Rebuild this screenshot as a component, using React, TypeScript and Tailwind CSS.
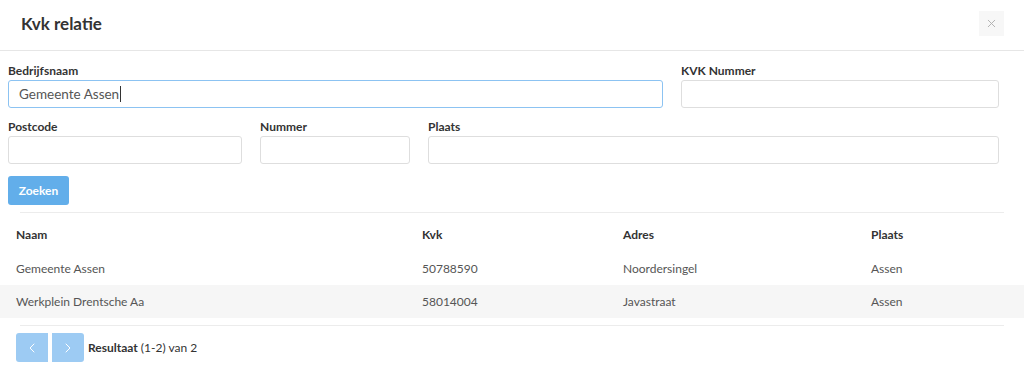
import { ChevronLeft, ChevronRight, X } from "lucide-react";

const rows = [
  { naam: "Gemeente Assen", kvk: "50788590", adres: "Noordersingel", plaats: "Assen" },
  { naam: "Werkplein Drentsche Aa", kvk: "58014004", adres: "Javastraat", plaats: "Assen" },
];

function Field({ label, width, focused, value }: { label: string; width: string; focused?: boolean; value?: string }) {
  return (
    <label className={`flex flex-col ${width}`}>
      <span className="h-[17px] text-[12px] font-bold leading-[16px] text-[#333]">{label}</span>
      <div
        className={`flex h-[28px] items-center rounded-[3px] border bg-white px-[10px] text-[13.5px] text-[#555] ${
          focused ? "border-[#8cc3f2]" : "border-[#dedede]"
        }`}
      >
        {value}
        {focused && <span className="ml-px inline-block h-[16px] w-px bg-[#333]" />}
      </div>
    </label>
  );
}

export default function App() {
  return (
    <div className="h-[374px] w-[1024px] bg-white font-['Lato',sans-serif] text-[#333]">
      <header className="flex h-[51px] items-center justify-between border-b border-[#e6e6e6] pl-[21px] pr-[20px]">
        <h1 className="-mt-[2px] text-[17px] font-bold text-[#333]">Kvk relatie</h1>
        <button className="-mt-[3px] flex h-[25px] w-[25px] items-center justify-center bg-[#f7f7f7] text-[#b0b0b0]">
          <X size={13} strokeWidth={1.75} />
        </button>
      </header>

      <div className="flex flex-col px-[8px] pt-[12px]">
        <div className="flex gap-[18px]">
          <Field label="Bedrijfsnaam" width="w-[655px]" focused value="Gemeente Assen" />
          <Field label="KVK Nummer" width="w-[318px]" />
        </div>
        <div className="mt-[11px] flex gap-[18px]">
          <Field label="Postcode" width="w-[234px]" />
          <Field label="Nummer" width="w-[150px]" />
          <Field label="Plaats" width="w-[571px]" />
        </div>
        <div className="mt-[12px]">
          <button className="h-[29px] w-[61px] rounded-[3px] bg-[#62aeea] text-[12px] font-bold text-white">
            Zoeken
          </button>
        </div>
      </div>

      <div className="mx-[20px] mt-[7px] border-t border-[#ececec]" />

      <table className="mt-[5px] w-[1024px] table-fixed border-collapse text-[12px]">
        <colgroup>
          <col className="w-[406px]" />
          <col className="w-[201px]" />
          <col className="w-[248px]" />
          <col className="w-[169px]" />
        </colgroup>
        <thead>
          <tr className="h-[34px] text-left">
            <th className="pl-[16px] font-bold text-[#333]">Naam</th>
            <th className="pl-[16px] font-bold text-[#333]">Kvk</th>
            <th className="pl-[16px] font-bold text-[#333]">Adres</th>
            <th className="pl-[16px] font-bold text-[#333]">Plaats</th>
          </tr>
        </thead>
        <tbody>
          {rows.map((row, i) => (
            <tr key={row.kvk} className={`h-[33px] text-[#555] ${i % 2 === 1 ? "bg-[#f6f6f6]" : ""}`}>
              <td className="pl-[16px]">{row.naam}</td>
              <td className="pl-[16px]">{row.kvk}</td>
              <td className="pl-[16px]">{row.adres}</td>
              <td className="pl-[16px]">{row.plaats}</td>
            </tr>
          ))}
        </tbody>
      </table>

      <div className="mx-[20px] mt-[7px] border-t border-[#ececec]" />

      <div className="mt-[7px] flex items-center pl-[16px]">
        <button className="flex h-[29px] w-[32px] items-center justify-center rounded-l-[3px] bg-[#9dcbf3] text-white">
          <ChevronLeft size={16} strokeWidth={1.5} />
        </button>
        <button className="ml-[4px] flex h-[29px] w-[32px] items-center justify-center rounded-r-[3px] bg-[#9dcbf3] text-white">
          <ChevronRight size={16} strokeWidth={1.5} />
        </button>
        <span className="ml-[4px] text-[12px] text-[#333]">
          <span className="font-bold">Resultaat</span> (1-2) van 2
        </span>
      </div>
    </div>
  );
}
